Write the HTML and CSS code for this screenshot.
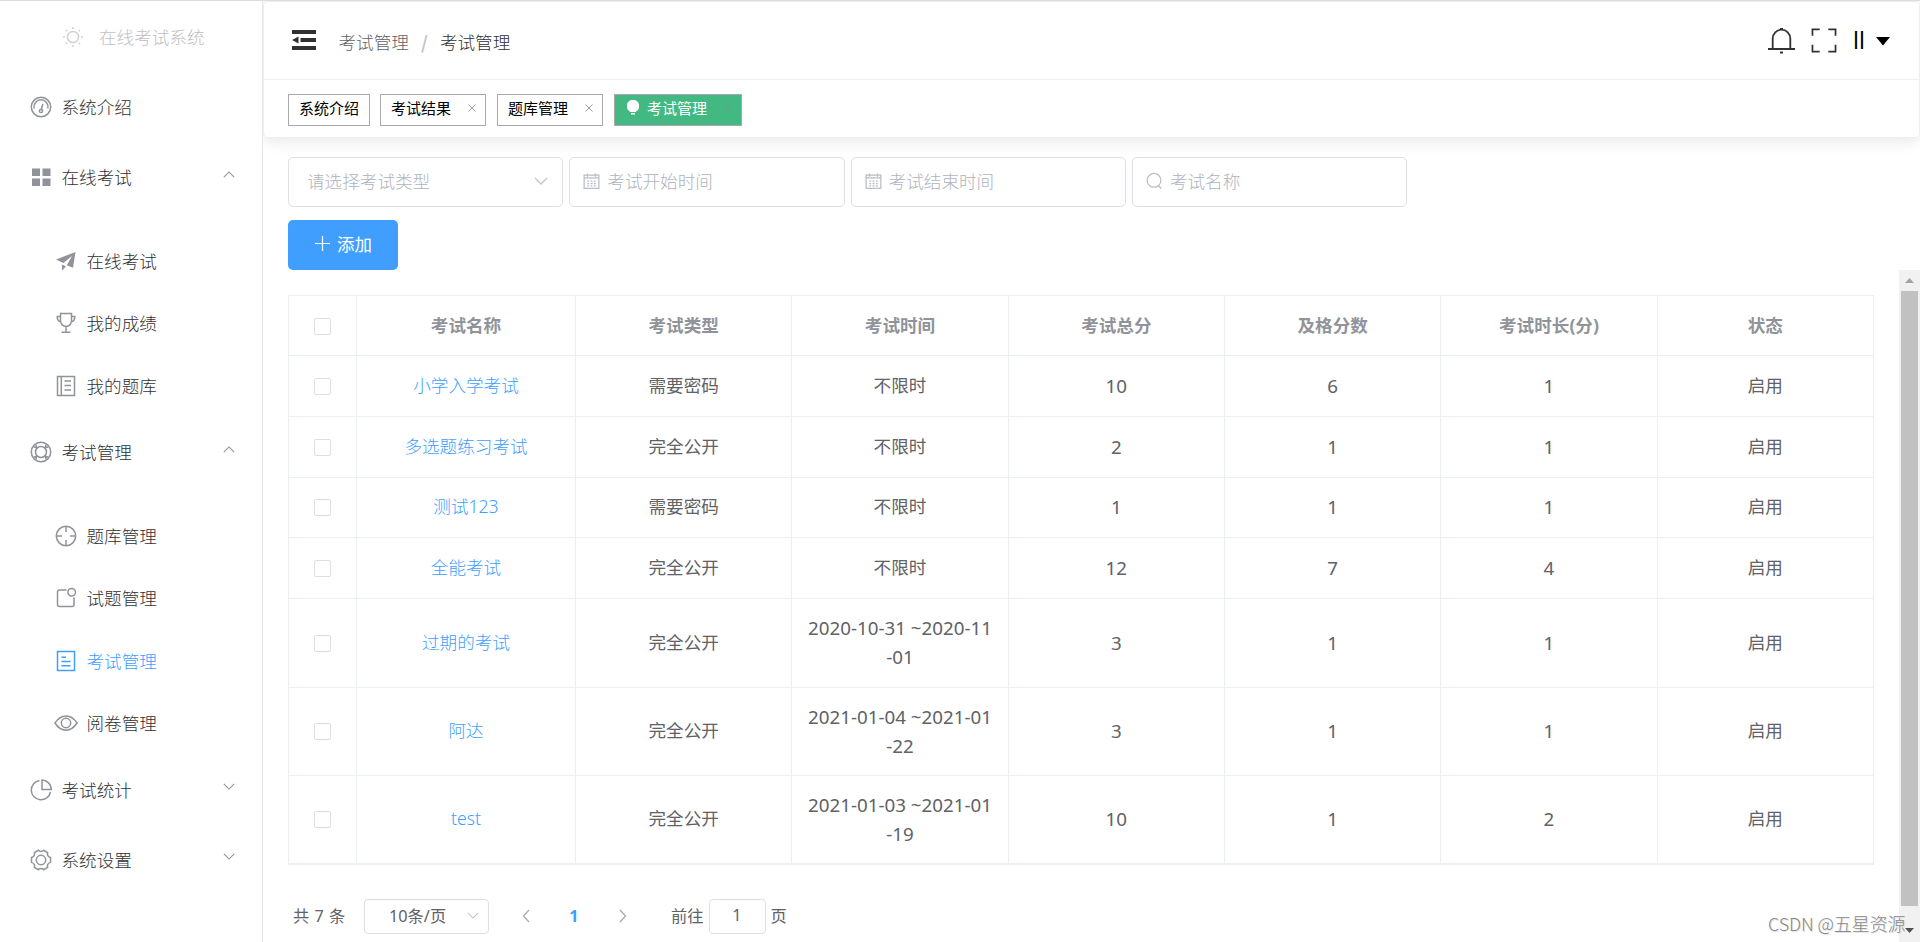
FILE: index.html
```html
<!DOCTYPE html>
<html lang="zh-CN">
<head>
<meta charset="utf-8">
<title>在线考试系统</title>
<link rel="stylesheet" href="styles.css">
</head>
<body>
<svg class="sprite" aria-hidden="true">
  <symbol id="down" viewBox="0 0 14 8"><path d="M1 1l6 6 6-6"/></symbol>
  <symbol id="up" viewBox="0 0 14 8"><path d="M1 7l6-6 6 6"/></symbol>
  <symbol id="close" viewBox="0 0 10 10"><path d="M1.5 1.5l7 7M8.5 1.5l-7 7"/></symbol>
  <symbol id="calendar" viewBox="0 0 18 18"><path d="M1.2 2.8h15.6v14H1.2zM1.2 5.6h15.6M4.8 1v3.4M13.2 1v3.4"/><path d="M4.5 9.2h2M8 9.2h2M11.5 9.2h2M4.5 11.8h2M8 11.8h2M11.5 11.8h2M4.5 14.2h2M8 14.2h2M11.5 14.2h2"/></symbol>
</svg>
<div class="app">
  <aside class="sidebar">
    <div class="brand">
      <svg class="icon" viewBox="0 0 22 22"><circle cx="11" cy="11" r="5.6"/><path d="M11 1v2M11 19v2M1 11h2M19 11h2M4 4l1.3 1.3M16.700 16.700L18 18M4 18l1.300-1.300M16.700 5.300L18 4"/></svg>
      <span>在线考试系统</span>
    </div>
    <nav>
      <a class="item"><svg class="icon" viewBox="0 0 22 22"><circle cx="11" cy="11" r="9.700"/><path d="M4.200 12.500A7 7 0 1 1 17.800 12.500M11.300 13.500L12.900 8"/><circle cx="11" cy="15" r="1.600"/></svg><span>系统介绍</span></a>
      <a class="item"><svg class="icon" viewBox="0 0 22 22"><path class="solid" d="M2 2.500h8v7.500H2zM12.500 2.500h8v7.500h-8zM2 12.500h8v7.500H2zM12.500 12.500h8v7.500h-8z"/></svg><span>在线考试</span><svg class="arrow"><use href="#up"/></svg></a>
      <div class="group">
        <a class="sub"><svg class="icon" viewBox="0 0 22 22"><path class="solid" d="M1 9.500L20.500 2 18 17.800l-6.200-2.600L17 6 8.400 13zM7 14.500l4 2-4 4.300z"/></svg><span>在线考试</span></a>
        <a class="sub"><svg class="icon" viewBox="0 0 22 22"><path d="M5.500 1.500h11v7.500a5.500 5.500 0 0 1-11 0zM5.500 4.500H2.200c0 3.500.8 5 3.800 5.300M16.500 4.500h3.300c0 3.500-.8 5-3.800 5.300M11 14.500v5.800M6.500 20.300h9"/></svg><span>我的成绩</span></a>
        <a class="sub"><svg class="icon" viewBox="0 0 22 22"><path d="M2.500 1.500h17v19h-17zM6.300 1.500v19M9.500 6h6.500M9.500 10.500h6.500M9.500 15h6.500"/></svg><span>我的题库</span></a>
      </div>
      <a class="item"><svg class="icon" viewBox="0 0 22 22"><circle cx="11" cy="11" r="9.700"/><circle cx="11" cy="11" r="5.500"/><path d="M4 6l3.200 1M6 4l1 3.200M18 6l-3.200 1M16 4l-1 3.200M4 16l3.200-1M6 18l1-3.200M18 16l-3.200-1M16 18l-1-3.200"/></svg><span>考试管理</span><svg class="arrow"><use href="#up"/></svg></a>
      <div class="group">
        <a class="sub"><svg class="icon" viewBox="0 0 22 22"><circle cx="11" cy="11" r="9.700"/><path d="M11 1.500V7M11 15v5.500M1.500 11H7M15 11h5.500"/></svg><span>题库管理</span></a>
        <a class="sub"><svg class="icon" viewBox="0 0 22 22"><path d="M11.500 3H4.500a2 2 0 0 0-2 2v12.500a2 2 0 0 0 2 2H17a2 2 0 0 0 2-2V10.500"/><circle cx="16.700" cy="5.200" r="3.800"/></svg><span>试题管理</span></a>
        <a class="sub active"><svg class="icon" viewBox="0 0 22 22"><path d="M2.500 1.500h17v19h-17zM6.500 7.300h4.500M6.500 11.500h9M6.500 15.800h9"/></svg><span>考试管理</span></a>
        <a class="sub"><svg class="icon wide" viewBox="0 0 24 22"><path d="M1 11C7 1.500 17 1.500 23 11 17 20.500 7 20.500 1 11z"/><circle cx="12" cy="11" r="4.700"/></svg><span>阅卷管理</span></a>
      </div>
      <a class="item"><svg class="icon" viewBox="0 0 22 22"><path d="M9.500 1.500A9.700 9.700 0 1 0 20.500 13M12 1v9.500h9.300A9.500 9.500 0 0 0 12 1z"/></svg><span>考试统计</span><svg class="arrow"><use href="#down"/></svg></a>
      <a class="item"><svg class="icon" viewBox="0 0 22 22"><circle cx="11" cy="11" r="4.700"/><path d="M8.300 1.300c1.400 1.600 4 1.600 5.400 0l3.900 2.200c-.6 2.300.6 4.300 2.900 5v4.900c-2.300.7-3.500 2.700-2.900 5l-3.900 2.300c-1.400-1.600-4-1.600-5.400 0l-3.900-2.300c.6-2.300-.6-4.300-2.900-5V8.500c2.300-.7 3.500-2.700 2.900-5z"/></svg><span>系统设置</span><svg class="arrow"><use href="#down"/></svg></a>
    </nav>
  </aside>
  <div class="main">
    <header class="card">
      <div class="bar">
        <svg class="fold" viewBox="0 0 24 20"><path d="M0 0h24v4H0zM8.500 8H24v4H8.500zM0 16h24v4H0zM0 10l6.500-3.600v7.200z"/></svg>
        <div class="crumbs"><span>考试管理</span><i>/</i><span class="current">考试管理</span></div>
        <div class="tools">
          <svg class="bell" viewBox="0 0 27 27"><path d="M4.700 21.800V11.500a8.800 8.800 0 0 1 17.600 0v10.300M0 22h27M12 1.800h3M12 25.500h3"/></svg>
          <svg class="full" viewBox="0 0 27 26"><path d="M1.500 8V1.500H9M18 1.500h7.500V8M1.500 17.500V24.500H9M18 24.500h7.500V17.500"/></svg>
          <span class="user">ll</span>
          <svg class="caret" viewBox="0 0 14 9"><path d="M0 0h14L7 8.500z"/></svg>
        </div>
      </div>
      <div class="tabs">
        <a class="tab">系统介绍</a>
        <a class="tab">考试结果<svg><use href="#close"/></svg></a>
        <a class="tab">题库管理<svg><use href="#close"/></svg></a>
        <a class="tab on"><svg class="bulb" viewBox="0 0 12 15"><path d="M6 0a6 6 0 0 1 3.200 11.200V12H2.800v-.8A6 6 0 0 1 6 0zM4 13h4v1.500H4z"/></svg>考试管理<svg><use href="#close"/></svg></a>
      </div>
    </header>
    <section class="filters">
      <div class="field select"><span>请选择考试类型</span><svg class="arrow"><use href="#down"/></svg></div>
      <div class="field"><svg class="pre"><use href="#calendar"/></svg><span>考试开始时间</span></div>
      <div class="field"><svg class="pre"><use href="#calendar"/></svg><span>考试结束时间</span></div>
      <div class="field"><svg class="pre" viewBox="0 0 18 18"><circle cx="8.500" cy="8.300" r="7.300"/><path d="M13 14l3.300 3"/></svg><span>考试名称</span></div>
    </section>
    <button class="add"><svg viewBox="0 0 16 16"><path d="M8 0v16M0 8h16"/></svg><span>添加</span></button>
    <div class="scroll">
      <div class="content">
        <div class="table">
          <div class="row head"><div><i class="box"></i></div><div>考试名称</div><div>考试类型</div><div>考试时间</div><div>考试总分</div><div>及格分数</div><div>考试时长(分)</div><div>状态</div></div>
          <div class="row"><div><i class="box"></i></div><div class="link">小学入学考试</div><div>需要密码</div><div>不限时</div><div class="num">10</div><div class="num">6</div><div class="num">1</div><div>启用</div></div>
          <div class="row"><div><i class="box"></i></div><div class="link">多选题练习考试</div><div>完全公开</div><div>不限时</div><div class="num">2</div><div class="num">1</div><div class="num">1</div><div>启用</div></div>
          <div class="row"><div><i class="box"></i></div><div class="link">测试123</div><div>需要密码</div><div>不限时</div><div class="num">1</div><div class="num">1</div><div class="num">1</div><div>启用</div></div>
          <div class="row"><div><i class="box"></i></div><div class="link">全能考试</div><div>完全公开</div><div>不限时</div><div class="num">12</div><div class="num">7</div><div class="num">4</div><div>启用</div></div>
          <div class="row"><div><i class="box"></i></div><div class="link">过期的考试</div><div>完全公开</div><div class="num">2020-10-31 ~2020-11<br>-01</div><div class="num">3</div><div class="num">1</div><div class="num">1</div><div>启用</div></div>
          <div class="row"><div><i class="box"></i></div><div class="link">阿达</div><div>完全公开</div><div class="num">2021-01-04 ~2021-01<br>-22</div><div class="num">3</div><div class="num">1</div><div class="num">1</div><div>启用</div></div>
          <div class="row"><div><i class="box"></i></div><div class="link">test</div><div>完全公开</div><div class="num">2021-01-03 ~2021-01<br>-19</div><div class="num">10</div><div class="num">1</div><div class="num">2</div><div>启用</div></div>
        </div>
        <div class="pager">
          <span class="total">共 7 条</span>
          <span class="size"><span>10条/页</span><svg class="arrow"><use href="#down"/></svg></span>
          <svg class="step" viewBox="0 0 8 14"><path d="M7 1L1.500 7 7 13"/></svg>
          <b>1</b>
          <svg class="step" viewBox="0 0 8 14"><path d="M1 1l5.500 6L1 13"/></svg>
          <span class="goto">前往</span><span class="page">1</span><span>页</span>
        </div>
      </div>
      <div class="track">
        <svg viewBox="0 0 9 5"><path d="M0 5l4.500-5L9 5z"/></svg>
        <div class="thumb"></div>
        <svg class="dark" viewBox="0 0 9 5"><path d="M0 0h9L4.500 5z"/></svg>
      </div>
    </div>
  </div>
  <div class="watermark">CSDN @五星资源</div>
</div>
</body>
</html>
```

FILE: styles.css
```css
* { box-sizing: border-box; }
body { margin: 0; background: #fff; font-family: "Noto Sans", "Noto Sans CJK SC", sans-serif; font-size: 17.6px; color: #606266; }
svg { display: block; flex: none; fill: none; stroke: currentColor; stroke-width: 1.3; }
.sprite { position: absolute; width: 0; height: 0; }
.solid { fill: currentColor; stroke: none; }
i { font-style: normal; }
.app { position: relative; display: flex; width: 1920px; height: 942px; overflow: hidden; border-top: 1px solid #dcdce0; }

.sidebar { position: relative; z-index: 1; width: 263px; flex: none; background: #fff; border-right: 1px solid #e6e6e6; color: #303133; font-family: "Noto Sans CJK SC", sans-serif; font-weight: 300; }
.brand { display: flex; align-items: center; gap: 15px; height: 72px; padding-left: 62px; color: #c0c0c0; }
.brand span { padding-bottom: 1px; }
.sidebar .icon { width: 22px; height: 22px; color: #909399; stroke-width: 1.5; }
.sidebar .brand .icon { color: #d0d0d0; }
.item, .sub { display: flex; align-items: center; padding-bottom: 2px; }
.item { height: 70px; padding-left: 29.5px; padding-right: 27px; gap: 10px; }
.item .arrow { margin-left: auto; margin-top: -6px; }
.item span, .sub span { padding-bottom: 1px; }
.arrow { width: 12px; height: 7px; color: #909399; }
.group { padding-top: 17.5px; }
.sub { height: 62.5px; padding-left: 54.5px; gap: 10px; }
.sub .wide { width: 24px; margin: 0 -1px; }
.sub.active, .sub.active .icon { color: #409eff; }

.main { flex: 1; min-width: 0; display: flex; flex-direction: column; }
.card { height: 137px; flex: none; border: 1px solid #ebeef5; border-radius: 5px; box-shadow: 0 2.5px 15px rgba(0,0,0,.1); }
.bar { display: flex; align-items: center; height: 78px; padding: 0 29px 1px 28px; border-bottom: 1px solid #ebeef5; }
.fold { width: 24px; height: 20px; fill: #303133; stroke: none; }
.crumbs { display: flex; margin: 3px 0 0 22.5px; font-family: "Noto Sans CJK SC", sans-serif; font-weight: 300; }
.crumbs i { width: 31px; text-align: center; color: #c0c4cc; font-weight: 700; }
.crumbs .current { color: #303133; }
.tools { display: flex; align-items: center; margin-left: auto; color: #303133; }
.tools svg { stroke-width: 1.8; }
.bell { width: 27px; height: 27px; }
.full { width: 26px; height: 25px; margin-left: 16px; }
.user { width: 12px; margin-left: 16px; font-size: 23px; line-height: 27px; color: #000; }
.tools .caret { width: 14px; height: 9px; margin: 2px 0 0 11px; fill: #000; stroke: none; }
.tabs { display: flex; gap: 11px; padding: 14px 24px; color: #000; font: 15px "Noto Sans CJK SC", sans-serif; }
.tab { display: flex; align-items: center; height: 32px; padding: 0 10px 5px 10px; border: 1px solid #a9a9a9; }
.tab svg { width: 10px; height: 10px; margin: 0 -2px 0 16px; color: #999; stroke-width: 1; }
.tab:first-child { margin-right: -1px; }
.tab.on { background: #42b983; color: #fff; }
.tab.on svg { color: #6f9c88; }
.tab.on .bulb { width: 12px; height: 15px; fill: #fff; stroke: none; margin: 0 8px 0 2px; }
.tab.on svg:last-child { margin-right: -2px; }

.filters { display: flex; gap: 6px; padding: 19px 25px 0; color: #aeb3bd; font-family: "Noto Sans CJK SC", sans-serif; font-weight: 300; }
.filters .arrow { color: #c0c4cc; width: 14px; height: 8px; }
.field { display: flex; align-items: center; width: 275.3px; height: 50px; padding: 0 14px 3px 13px; border: 1px solid #dcdfe6; border-radius: 5px; }
.field.select { justify-content: space-between; padding-left: 18px; }
.field .pre { width: 17px; height: 18px; margin-right: 7px; color: #b8bcc6; }
.add { display: flex; align-items: center; gap: 7px; align-self: flex-start; width: 110px; height: 50px; margin: 13px 0 0 25px; padding: 0 0 3px 27px; border: 0; border-radius: 5px; background: #409eff; color: #fff; font: 400 17.5px "Noto Sans CJK SC", sans-serif; }
.add svg { width: 15px; height: 15px; }

.scroll { display: flex; justify-content: space-between; flex: 1; }
.content { padding: 25px 0 0 25px; }
.table { display: grid; grid-template-rows: 60px 61px 61px 60px 61px 89px 88px 88px; width: 1586px; border: 1px solid #ebeef5; border-right: 0; line-height: 28.75px; }
.row { display: grid; grid-template-columns: 68px 219px repeat(6, 216.333px); border-bottom: 1px solid #ebeef5; text-align: center; }
.row > div { display: flex; align-items: center; justify-content: center; padding-bottom: 1.5px; border-right: 1px solid #ebeef5; }
.row.head > div { padding-bottom: 0; }
.row > .num { font-size: 18.75px; padding-bottom: 0; }
.head { color: #909399; font-weight: 700; }
.row > .link { color: #409eff; font-weight: 300; padding-bottom: 2px; }
.box { width: 17px; height: 17px; border: 1px solid #dcdfe6; border-radius: 2px; margin-top: 2px; }
.pager { display: flex; align-items: center; height: 35px; margin-top: 34px; padding-left: 5px; font-size: 16.25px; line-height: 30px; }
.pager > span { padding-bottom: 2px; }
.total { width: 71px; word-spacing: 1px; }
.pager > .size { display: flex; align-items: center; justify-content: space-between; width: 125px; height: 35px; padding: 0 9px 2px 24px; border: 1px solid #dcdfe6; border-radius: 4px; }
.size .arrow { color: #c0c4cc; }
.step { width: 8px; height: 14px; color: #a8abb2; margin: 0 0 1px 33px; }
.pager b { width: 12px; margin-left: 38px; padding-bottom: 2px; text-align: center; color: #409eff; }
.pager b + .step { margin-left: 39px; }
.goto { margin-left: 44px; }
.page { width: 57px; height: 35px; margin: 0 5px; border: 1px solid #dcdfe6; border-radius: 4px; text-align: center; }
.track { display: flex; flex-direction: column; align-items: center; width: 21px; background: #f1f1f1; }
.track svg { width: 9px; height: 5px; margin: 8px 0; fill: #a3a3a3; stroke: none; }
.thumb { width: 17px; height: 615px; background: #c1c1c1; }
.track .dark { margin: 22px 0 0; fill: #505050; }
.watermark { position: absolute; left: 1768px; top: 908px; font: 300 18px/28px "Noto Sans CJK SC", sans-serif; letter-spacing: -.1px; color: #888; white-space: nowrap; text-shadow: 1px 1px 1px #ddd; }
```
